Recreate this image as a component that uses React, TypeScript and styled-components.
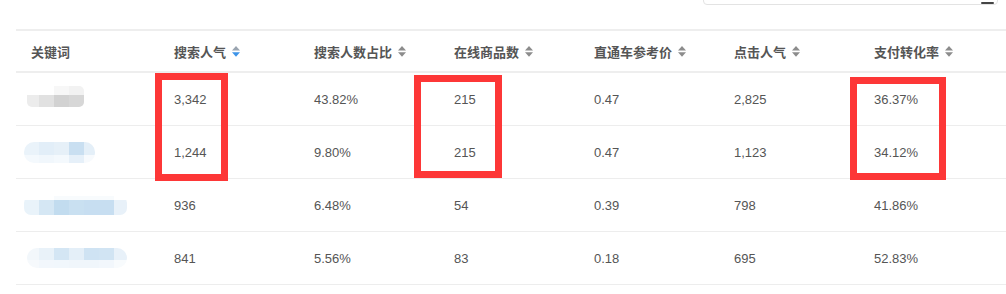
import React from "react";
import styled, { createGlobalStyle } from "styled-components";

const Global = createGlobalStyle`
  html, body { margin: 0; padding: 0; background: #fff; }
  body { font-family: "Liberation Sans", Arial, sans-serif; }
`;

const Page = styled.div`
  position: relative;
  width: 1006px;
  height: 294px;
  overflow: hidden;
`;

const TopBar = styled.div`
  height: 29px;
  display: flex;
  justify-content: flex-end;
  align-items: flex-start;
  padding-right: 8px;
`;

const SearchBox = styled.div`
  position: relative;
  width: 295px;
  height: 30px;
  margin-top: -25px;
  border: 1px solid #e3e3e3;
  border-radius: 4px;
  background: #fff;
  display: flex;
  align-items: flex-end;
  justify-content: flex-end;
  padding-right: 3px;
  box-sizing: border-box;
`;

const Table = styled.div`
  margin-left: 16px;
  border-top: 2px solid #eeeeee;
`;

const cols = "143px repeat(5, 140px) 1fr";

const HeaderRow = styled.div`
  display: grid;
  grid-template-columns: ${cols};
  height: 40px;
  border-bottom: 2px solid #eeeeee;
`;

const HeadCell = styled.div`
  display: flex;
  align-items: center;
  gap: 6px;
  padding-left: 15px;
  font-family: "Noto Sans CJK SC", "Liberation Sans", sans-serif;
  font-weight: 700;
  font-size: 13px;
  color: #555;
`;

const Row = styled.div`
  display: grid;
  grid-template-columns: ${cols};
  height: 52px;
  border-bottom: 1px solid #ededed;
`;

const Cell = styled.div`
  display: flex;
  align-items: center;
  padding-left: 15px;
  font-size: 13px;
  color: #555;
`;

const KeyCell = styled.div`
  display: flex;
  align-items: center;
  padding-left: 8px;
`;

const Mark = styled.div<{ $x: number; $y: number; $w: number; $h: number }>`
  position: absolute;
  left: ${(p) => p.$x}px;
  top: ${(p) => p.$y}px;
  width: ${(p) => p.$w}px;
  height: ${(p) => p.$h}px;
  border: 7px solid #fd3737;
  box-sizing: border-box;
  pointer-events: none;
`;

const SortIcon = ({ active }: { active?: boolean }) => (
  <svg width="8" height="11" viewBox="0 0 8 11">
    <path d="M0 4.5 L4 0 L8 4.5 Z" fill={active ? "#9aa4b0" : "#8c8c8c"} />
    <path d="M0 6.2 L8 6.2 L4 10.8 Z" fill={active ? "#3e94e8" : "#8c8c8c"} />
  </svg>
);

type Block = [number, number, number, number, string];

type MosaicDef = { top: number; clip: [number, number, number, number, number]; blocks: Block[] };

const mosaics: MosaicDef[] = [
  {
    top: 73,
    clip: [27, 86, 57, 21, 5],
    blocks: [
      [54, 86, 15, 9, "#f7f7f7"],
      [69, 86, 15, 9, "#f2f2f2"],
      [27, 95, 12, 12, "#ececec"],
      [39, 95, 15, 12, "#e1e1e1"],
      [54, 95, 15, 12, "#d2d2d2"],
      [69, 95, 15, 12, "#d7d7d7"],
    ],
  },
  {
    top: 126,
    clip: [24, 142, 71, 21, 10],
    blocks: [
      [24, 142, 15, 13, "#eaf3fa"],
      [39, 142, 15, 13, "#e2eef8"],
      [54, 142, 15, 13, "#e6f0f8"],
      [69, 142, 15, 13, "#c9dff1"],
      [84, 142, 11, 13, "#e4eff8"],
      [24, 155, 15, 8, "#f4f9fd"],
      [39, 155, 15, 8, "#f1f7fc"],
      [54, 155, 15, 8, "#f4f9fd"],
      [69, 155, 15, 8, "#e6f0f9"],
      [84, 155, 11, 8, "#f7fafd"],
    ],
  },
  {
    top: 179,
    clip: [24, 196, 103, 19, 7],
    blocks: [
      [54, 196, 60, 4, "#f8fbfd"],
      [24, 200, 15, 15, "#e9f3fa"],
      [39, 200, 15, 15, "#d5e7f4"],
      [54, 200, 15, 15, "#c2dcef"],
      [69, 200, 15, 15, "#c9e0f1"],
      [84, 200, 15, 15, "#c7def1"],
      [99, 200, 15, 15, "#c7def1"],
      [114, 200, 13, 15, "#e8f1f9"],
    ],
  },
  {
    top: 232,
    clip: [27, 248, 100, 20, 10],
    blocks: [
      [27, 248, 12, 12, "#f2f7fb"],
      [39, 248, 15, 12, "#e9f2f9"],
      [54, 248, 15, 12, "#d4e6f4"],
      [69, 248, 15, 12, "#e4eff8"],
      [84, 248, 15, 12, "#cfe3f3"],
      [99, 248, 15, 12, "#d1e4f3"],
      [114, 248, 13, 12, "#e8f1f9"],
      [27, 260, 12, 8, "#f6f9fc"],
      [39, 260, 15, 8, "#f2f7fc"],
      [54, 260, 15, 8, "#f1f7fc"],
      [69, 260, 15, 8, "#f0f6fb"],
      [84, 260, 15, 8, "#f0f6fb"],
      [99, 260, 15, 8, "#f2f7fc"],
      [114, 260, 13, 8, "#f8fbfd"],
    ],
  },
];

const Mosaic = ({ def, id }: { def: MosaicDef; id: string }) => {
  const [cx, cy, cw, ch, r] = def.clip;
  return (
    <svg width="106" height="30" viewBox={`24 ${def.top + 11} 106 30`}>
      <defs>
        <clipPath id={id}>
          <rect x={cx} y={cy} width={cw} height={ch} rx={r} ry={r} />
        </clipPath>
      </defs>
      <g clipPath={`url(#${id})`}>
        {def.blocks.map(([x, y, w, h, c], i) => (
          <rect key={i} x={x} y={y} width={w} height={h} fill={c} />
        ))}
      </g>
    </svg>
  );
};

const headers = ["搜索人气", "搜索人数占比", "在线商品数", "直通车参考价", "点击人气", "支付转化率"];

const rows = [
  ["3,342", "43.82%", "215", "0.47", "2,825", "36.37%"],
  ["1,244", "9.80%", "215", "0.47", "1,123", "34.12%"],
  ["936", "6.48%", "54", "0.39", "798", "41.86%"],
  ["841", "5.56%", "83", "0.18", "695", "52.83%"],
];

export default function App() {
  return (
    <Page>
      <Global />
      <TopBar>
        <SearchBox>
          <svg width="13" height="2" viewBox="0 0 13 2">
            <rect x="0" y="0" width="13" height="2" rx="1" fill="#444" />
          </svg>
        </SearchBox>
      </TopBar>
      <Table>
        <HeaderRow>
          <HeadCell>关键词</HeadCell>
          {headers.map((h, i) => (
            <HeadCell key={h}>
              {h}
              <SortIcon active={i === 0} />
            </HeadCell>
          ))}
        </HeaderRow>
        {rows.map((r, ri) => (
          <Row key={ri}>
            <KeyCell>
              <Mosaic def={mosaics[ri]} id={`mz${ri}`} />
            </KeyCell>
            {r.map((v, ci) => (
              <Cell key={ci}>{v}</Cell>
            ))}
          </Row>
        ))}
      </Table>
      <Mark $x={155} $y={73} $w={73} $h={108} />
      <Mark $x={414} $y={75} $w={88} $h={103} />
      <Mark $x={850} $y={77} $w={96} $h={103} />
    </Page>
  );
}
